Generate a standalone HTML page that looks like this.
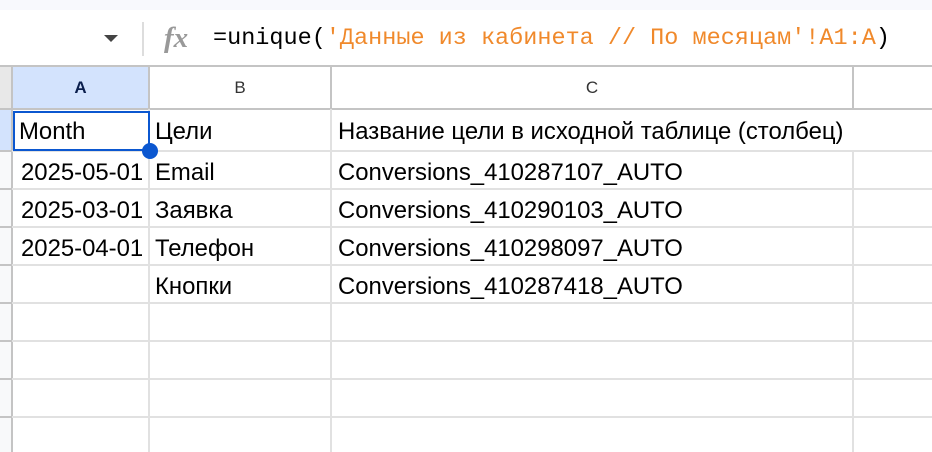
<!DOCTYPE html>
<html><head><meta charset="utf-8"><style>
body{margin:0;width:932px;height:452px;overflow:hidden;background:#fff;position:relative;font-family:"Liberation Sans",Arial,sans-serif}
.a{position:absolute}
.t{position:absolute;font-size:23.9px;color:#000;white-space:nowrap;line-height:24px}
.h{position:absolute;top:67px;height:42px;line-height:42px;text-align:center;font-size:17px;color:#333}
.hl{position:absolute;height:2px;background:#e1e1e1;left:12px;right:0}
.vl{position:absolute;width:2px;background:#e1e1e1;top:109px;bottom:0}
</style></head><body>
<div class="a" style="left:0;top:0;width:932px;height:10px;background:#f8f9fd"></div>
<div class="a" style="left:104px;top:35px;width:0;height:0;border-left:7px solid transparent;border-right:7px solid transparent;border-top:7px solid #444"></div>
<div class="a" style="left:142px;top:22px;width:2px;height:34px;background:#ddd"></div>
<div class="a" style="left:164px;top:22px;font-family:'Liberation Serif',serif;font-style:italic;font-weight:bold;font-size:29px;color:#999">fx</div>
<div class="a" style="left:213px;top:25px;font-family:'Liberation Mono','DejaVu Sans Mono',monospace;font-size:23.5px;line-height:28px;color:#000;white-space:nowrap">=unique(<span style="color:#f0892b">'Данные из кабинета // По месяцам'!A1:A</span>)</div>
<!-- header -->
<div class="a" style="left:0;top:65px;width:932px;height:2px;background:#c4c4c4"></div>
<div class="a" style="left:0;top:67px;width:12px;height:385px;background:#f8f9fa"></div>
<div class="a" style="left:0;top:67px;width:12px;height:42px;background:#e8e8e8"></div>
<div class="a" style="left:0;top:110px;width:12px;height:41px;background:#d3e3fd"></div>
<div class="a" style="left:12px;top:67px;width:137px;height:42px;background:#d3e3fd"></div>
<div class="h" style="left:12px;width:137px;color:#0b1f4d;font-weight:bold">A</div>
<div class="h" style="left:149px;width:182px">B</div>
<div class="h" style="left:331px;width:522px">C</div>
<div class="a" style="left:0;top:108px;width:932px;height:2px;background:#c4c4c4"></div>
<div class="a" style="left:11px;top:67px;width:2px;height:385px;background:#c4c4c4"></div>
<div class="a" style="left:148px;top:67px;width:2px;height:42px;background:#c4c4c4"></div>
<div class="a" style="left:330px;top:67px;width:2px;height:42px;background:#c4c4c4"></div>
<div class="a" style="left:852px;top:67px;width:2px;height:42px;background:#c4c4c4"></div>
<!-- grid -->
<div class="hl" style="top:150px"></div><div class="hl" style="top:188px"></div><div class="hl" style="top:226px"></div><div class="hl" style="top:264px"></div><div class="hl" style="top:302px"></div><div class="hl" style="top:340px"></div><div class="hl" style="top:378px"></div><div class="hl" style="top:416px"></div>
<div class="a" style="left:0;top:150px;width:12px;height:2px;background:#c4c4c4"></div><div class="a" style="left:0;top:188px;width:12px;height:2px;background:#c4c4c4"></div><div class="a" style="left:0;top:226px;width:12px;height:2px;background:#c4c4c4"></div><div class="a" style="left:0;top:264px;width:12px;height:2px;background:#c4c4c4"></div><div class="a" style="left:0;top:302px;width:12px;height:2px;background:#c4c4c4"></div><div class="a" style="left:0;top:340px;width:12px;height:2px;background:#c4c4c4"></div><div class="a" style="left:0;top:378px;width:12px;height:2px;background:#c4c4c4"></div><div class="a" style="left:0;top:416px;width:12px;height:2px;background:#c4c4c4"></div>
<div class="vl" style="left:148px"></div><div class="vl" style="left:330px"></div><div class="vl" style="left:852px;top:152px"></div>
<!-- text -->
<div class="t" style="left:19px;top:120px">Month</div>
<div class="t" style="left:155px;top:120px">Цели</div>
<div class="t" style="left:338px;top:120px">Название цели в исходной таблице (столбец)</div>
<div class="t" style="left:21px;top:161px">2025-05-01</div><div class="t" style="left:155px;top:161px">Email</div><div class="t" style="left:338px;top:161px">Conversions_410287107_AUTO</div>
<div class="t" style="left:21px;top:199px">2025-03-01</div><div class="t" style="left:155px;top:199px">Заявка</div><div class="t" style="left:338px;top:199px">Conversions_410290103_AUTO</div>
<div class="t" style="left:21px;top:237px">2025-04-01</div><div class="t" style="left:155px;top:237px">Телефон</div><div class="t" style="left:338px;top:237px">Conversions_410298097_AUTO</div>
<div class="t" style="left:155px;top:275px">Кнопки</div><div class="t" style="left:338px;top:275px">Conversions_410287418_AUTO</div>
<!-- selection -->
<div class="a" style="left:13px;top:111px;width:133px;height:36px;border:2px solid #0b57d0"></div>
<div class="a" style="left:142px;top:143px;width:16px;height:16px;border-radius:50%;background:#0b57d0"></div>
</body></html>
